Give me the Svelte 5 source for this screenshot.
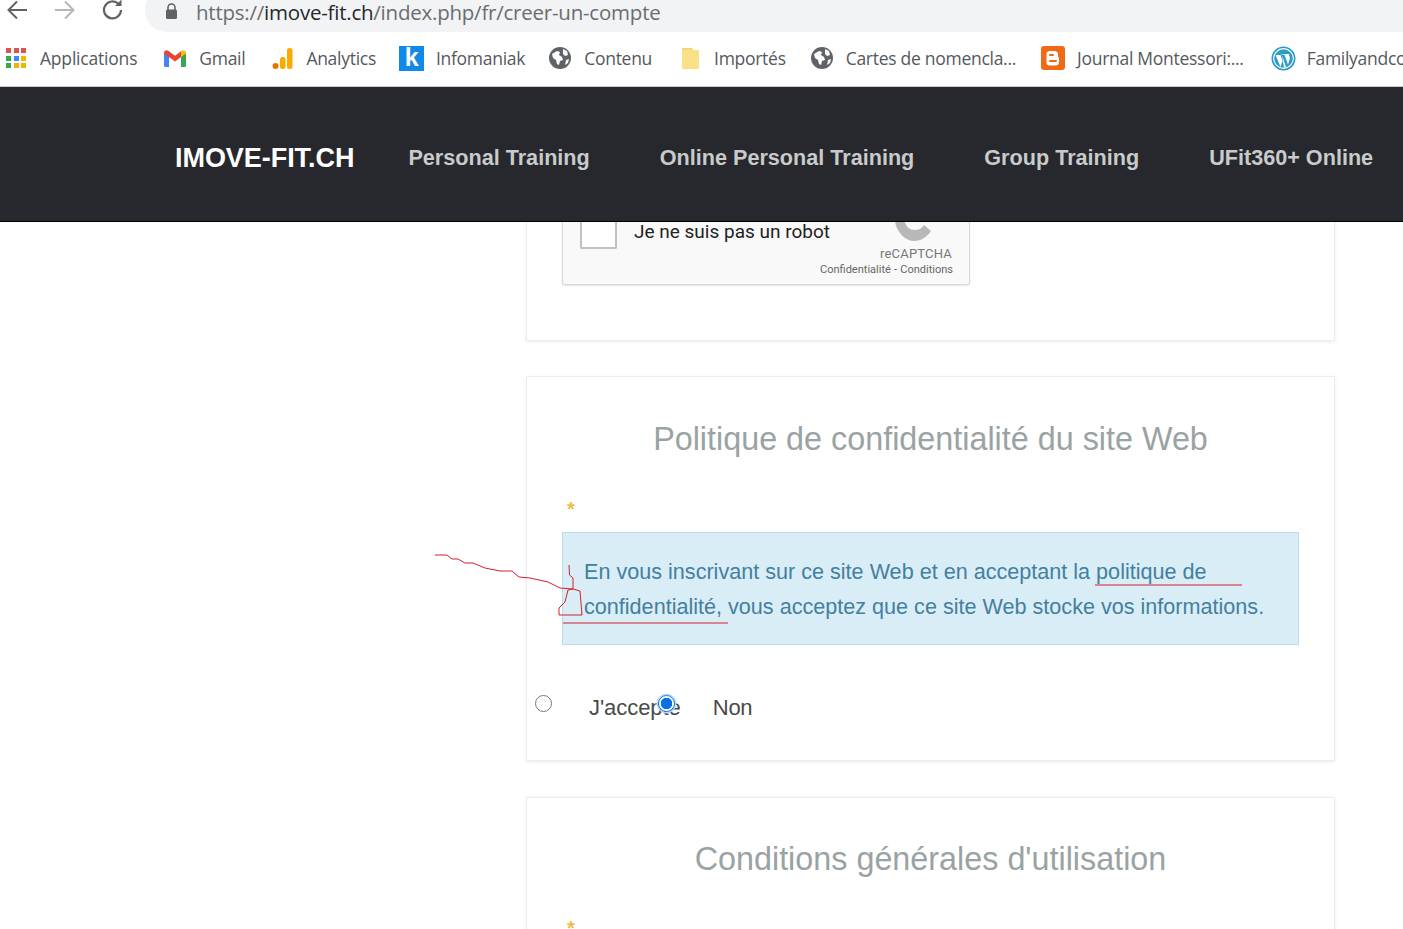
<script>
  const marks = [
    { label: 'Gmail', icon: 'gmail' },
    { label: 'Analytics', icon: 'analytics' },
    { label: 'Infomaniak', icon: 'k' },
    { label: 'Contenu', icon: 'globe' },
    { label: 'Importés', icon: 'folder' },
    { label: 'Cartes de nomencla...', icon: 'globe' },
    { label: 'Journal Montessori:...', icon: 'blogger' },
    { label: 'Familyandco', icon: 'wp' }
  ];
  const nav = ['Personal Training', 'Online Personal Training', 'Group Training', 'UFit360+ Online'];
  const appColors = ['#d9534f','#d9534f','#d9534f','#34a853','#4285f4','#f4b400','#34a853','#f4b400','#f4b400'];
</script>

<div class="page">
  <div class="toolbar">
    <div class="arrows">
      <svg width="24" height="24" viewBox="0 0 24 24" fill="none" stroke="#5f6368" stroke-width="2"><path d="M22 12H4M12 3.500L3.500 12l8.500 8.500"/></svg>
      <svg width="24" height="24" viewBox="0 0 24 24" fill="none" stroke="#b5b8bb" stroke-width="2"><path d="M2 12h18M12 3.500l8.500 8.500-8.500 8.500"/></svg>
      <svg width="24" height="24" viewBox="0 0 24 24" fill="none" stroke="#5f6368" stroke-width="2.200"><path d="M20 12a8.500 8.500 0 1 1-2.600-6.200"/><path d="M20.500 1.500v6.500h-6.500z" fill="#5f6368" stroke="none"/></svg>
    </div>
    <div class="omnibox">
      <svg width="13" height="17" viewBox="0 0 13 17"><path d="M3 7V4.500a3.500 3.500 0 0 1 7 0V7" fill="none" stroke="#5f6368" stroke-width="1.600"/><rect x="1" y="6.500" width="11" height="9.500" rx="1.500" fill="#5f6368"/></svg>
      <span class="url">https://<b>imove-fit.ch</b>/index.php/fr/creer-un-compte</span>
    </div>
  </div>

  <div class="bookmarks">
    <div class="mark first-mark">
      <span class="apps">{#each appColors as c}<i style:background={c}></i>{/each}</span>
      <span>Applications</span>
    </div>
    {#each marks as m}
      <div class="mark {m.icon}">
        {#if m.icon === 'gmail'}
          <svg width="22" height="17" viewBox="0 0 22 17"><path d="M0 3h5v14H1.500A1.500 1.500 0 0 1 0 15.500z" fill="#4285f4"/><path d="M17 3h5v12.500a1.500 1.500 0 0 1-1.500 1.500H17z" fill="#34a853"/><path d="M0 3C0 .6 2.500-.6 4.200.7L11 5.800 17 1.300V7l-6 4.500L0 3.500z" fill="#ea4335"/><path d="M17 1.300l.8-.6C19.500-.6 22 .6 22 3v.5L17 7z" fill="#fbbc04"/></svg>
        {:else if m.icon === 'analytics'}
          <svg width="21" height="23" viewBox="0 0 21 23"><circle cx="3.500" cy="19" r="3" fill="#e37400"/><rect x="8" y="10" width="5.500" height="12" rx="2.500" fill="#f9ab00"/><rect x="15" y="1" width="5.500" height="21" rx="2.500" fill="#f9ab00"/></svg>
        {:else if m.icon === 'k'}
          <span class="ksq">k</span>
        {:else if m.icon === 'globe'}
          <svg width="22" height="22" viewBox="0 0 22 22"><circle cx="11" cy="11" r="11" fill="#5f6368"/><path d="M3 7l5-3 3 1-1 3 3 2 1 3-3 1-1 4-2-1-1-4-3-2zM14 2l4 2 1 4-3 1-2-2zM17 13l3-1-1 4-3 2z" fill="#fff"/></svg>
        {:else if m.icon === 'folder'}
          <svg width="19" height="24" viewBox="0 0 19 24"><path d="M1 2h10l1 2h6v19H1z" fill="#fbe08a"/><path d="M1 2h10l1 2H1z" fill="#f7d56d"/></svg>
        {:else if m.icon === 'blogger'}
          <svg width="24" height="24" viewBox="0 0 24 24"><rect width="24" height="24" rx="3" fill="#f06a15"/><path d="M9 5h4.500A3.500 3.500 0 0 1 17 8.500V10c0 1 .5 1.500 1 1.500V16a3.500 3.500 0 0 1-3.500 3.500H9A3.500 3.500 0 0 1 5.500 16V8.500A3.500 3.500 0 0 1 9 5z" fill="#fff"/><path d="M9 9h3M9 15h6" stroke="#f06a15" stroke-width="2" stroke-linecap="round"/></svg>
        {:else if m.icon === 'wp'}
          <svg width="25" height="25" viewBox="0 0 25 25"><circle cx="12.500" cy="12.500" r="11.200" fill="#fff" stroke="#2d9cc6" stroke-width="1.600"/><circle cx="12.500" cy="12.500" r="9.300" fill="#2d9cc6"/><path d="M4.500 9l5 12 2-6-2-6zM8.500 8h7l-2 .8 3.500 10 1.800-6c.6-2-1-3-.8-4.800h-2.500l-1 .8-1.500 0M11 9l4 12-2 1z" fill="#fff"/></svg>
        {/if}
        <span class="mlabel">{m.label}</span>
      </div>
    {/each}
  </div>

  <header class="site">
    <span class="brand">IMOVE-FIT.CH</span>
    <nav>{#each nav as n}<span>{n}</span>{/each}</nav>
  </header>

  <main>
    <section class="card first">
      <div class="captcha">
        <span class="box"></span>
        <span class="robot">Je ne suis pas un robot</span>
        <div class="cap-right">
          <svg width="40" height="20" viewBox="0 0 40 20"><path d="M1 0h10c1 5 5 8 10 8 4 0 7-2 9-5l7 6c-4 6-10 10-17 10C12 19 3 11 1 0z" fill="#b8b8b8"/></svg>
          <span class="cap-name">reCAPTCHA</span>
          <span class="cap-links">Confidentialité - Conditions</span>
        </div>
      </div>
    </section>

    <section class="card second">
      <h2>Politique de confidentialité du site Web</h2>
      <div class="star">*</div>
      <div class="alert">
        En vous inscrivant sur ce site Web et en acceptant la politique de confidentialité, vous acceptez que ce site Web stocke vos informations.
      </div>
      <div class="choices">
        <input type="radio" name="a" />
        <label class="l1" for="r2">J'accepte</label>
        <input id="r2" type="radio" name="a" checked class="r2" />
        <label class="l2" for="r2">Non</label>
      </div>
    </section>

    <section class="card third">
      <h2>Conditions générales d'utilisation</h2>
      <div class="star">*</div>
    </section>
  </main>

  <svg class="ink" width="1403" height="929" viewBox="0 0 1403 929" fill="none" stroke="#d3202f" stroke-width="1">
    <path d="M435 555h12l5 4h6l7 4h8l12 5 15 3h12l7 6 11 1 18 4 12 6 13 1"/>
    <path d="M569 565l.5 10 3.500 3v11l7 2 2 24h-23v-7l6-6 3-12 5-1"/>
    <path d="M563 623h165M1095 585h147"/>
  </svg>
</div>

<style>
  :global(body) { margin: 0; background: #fff; }
  .page { position: relative; width: 1403px; height: 929px; overflow: hidden; background: #fff; font-family: "Liberation Sans", Arial, sans-serif; }
  .toolbar { height: 32px; display: flex; align-items: flex-end; }
  .arrows { width: 145px; box-sizing: border-box; padding: 0 0 10px 5px; display: flex; gap: 24px; }
  .omnibox { flex: 1; height: 44px; background: #f1f3f4; border-radius: 22px 0 0 22px; display: flex; align-items: flex-end; gap: 18px; padding: 0 0 9px 20px; box-sizing: border-box; }
  .omnibox svg { margin-bottom: 3px; }
  .url { font: 20.500px/22px "Open Sans", sans-serif; color: #6a6d71; letter-spacing: -0.23px; white-space: nowrap; }
  .url b { font-weight: 400; color: #26282b; }
  .bookmarks { height: 54px; display: flex; align-items: center; padding-left: 6px; gap: 25px; white-space: nowrap; overflow: hidden; border-bottom: 1px solid #c9c9c9; }
  .mark { display: flex; align-items: center; gap: 13px; font: 17.500px/24px "Open Sans", sans-serif; color: #55585c; letter-spacing: -0.28px; flex: none; position: relative; top: -1px; }
  .first-mark { gap: 14px; margin-right: 2px; letter-spacing: -0.2px; }
  .apps { display: grid; grid-template-columns: repeat(3, 5px); gap: 2.500px; }
  .apps i { width: 5px; height: 5px; display: block; }
  .gmail { margin-right: 2px; }
  .k { gap: 12px; margin-left: -2px; margin-right: -1px; }
  .folder { gap: 14px; }
  .folder svg { margin-left: 4px; }
  .blogger { gap: 12px; margin-right: 2px; }
  .wp { gap: 11px; }
  .ksq { width: 25px; height: 25px; background: #0f8ae8; color: #fff; font: bold 25px/23px "Liberation Sans", sans-serif; text-align: center; display: block; }
  .site { background: #26282d; border-bottom: 1px solid #000; display: flex; align-items: center; padding: 8px 0 0 175px; box-sizing: border-box; height: 135px; white-space: nowrap; position: relative; z-index: 2; }
  .brand { font: bold 27px/32px "Liberation Sans", sans-serif; color: #fff; letter-spacing: -0.05px; }
  nav { display: flex; gap: 70px; margin-left: 54px; }
  nav span { font: bold 21.620px/28px "Liberation Sans", sans-serif; color: #c9cbcb; }
  main { padding-left: 526px; }
  .card { width: 809px; box-sizing: border-box; border: 1px solid #ececec; box-shadow: 0 1px 3px rgba(0,0,0,.08); padding: 0 35px; background: #fff; margin-bottom: 36px; }
  .card.first { height: 119px; border-top: 0; margin-bottom: 35px; }
  .captcha { width: 408px; height: 63px; box-sizing: border-box; background: #f9f9f9; border: 1px solid #d8d8d8; border-top: 0; border-radius: 0 0 3px 3px; box-shadow: 0 1px 2px rgba(0,0,0,.1); display: flex; font-family: Roboto, sans-serif; position: relative; }
  .box { width: 37px; height: 27px; margin-left: 17px; background: #fff; border: 2px solid #c1c1c1; border-top: 0; border-radius: 0 0 2px 2px; box-sizing: border-box; }
  .robot { font-size: 19px; line-height: 20px; color: #222; margin-left: 17px; }
  .cap-right { position: absolute; right: 16px; top: 0; display: flex; flex-direction: column; align-items: flex-end; color: #777; }
  .cap-right svg { margin-right: 19px; }
  .cap-name { font-size: 13px; line-height: 16px; margin-top: 4px; margin-right: 1px; letter-spacing: .2px; }
  .cap-links { font-size: 11px; line-height: 14px; color: #666; margin-top: 1px; word-spacing: .5px; }
  h2 { margin: 0; font: 400 32.350px/40px "Liberation Sans", sans-serif; color: #9aa3a3; text-align: center; }
  .second { height: 385px; padding-top: 42px; }
  .third { height: 200px; padding-top: 41px; }
  .star { color: #f0bd4a; font-weight: bold; font-size: 20px; line-height: 20px; margin: 40px 0 0 5px; height: 15px; }
  .third .star { margin-top: 39px; }
  .alert { margin-top: 18px; width: 737px; height: 113px; box-sizing: border-box; background: #d9edf7; border: 1px solid #bcdce9; padding: 21px 21px 0; font-size: 21.600px; line-height: 35px; color: #44809f; }
  .choices { display: flex; align-items: flex-start; margin: 50px 0 0 -27px; height: 30px; }
  input { width: 17px; height: 17px; margin: 0; flex: none; }
  .r2 { appearance: none; margin-left: -23px; border-radius: 50%; border: 1.500px solid #0075ff; background: radial-gradient(circle, #0b6fe8 0 5.500px, #fff 6px); box-shadow: 0 0 0 1.500px #bcd9f7; box-sizing: border-box; }
  label { font-size: 22px; line-height: 26px; color: #4a4a4a; margin-left: 37px; letter-spacing: -0.3px; }
  .l1 { letter-spacing: -0.05px; }
  .l2 { margin-left: 38px; }
  .ink { position: absolute; left: 0; top: 0; pointer-events: none; z-index: 3; }
</style>
